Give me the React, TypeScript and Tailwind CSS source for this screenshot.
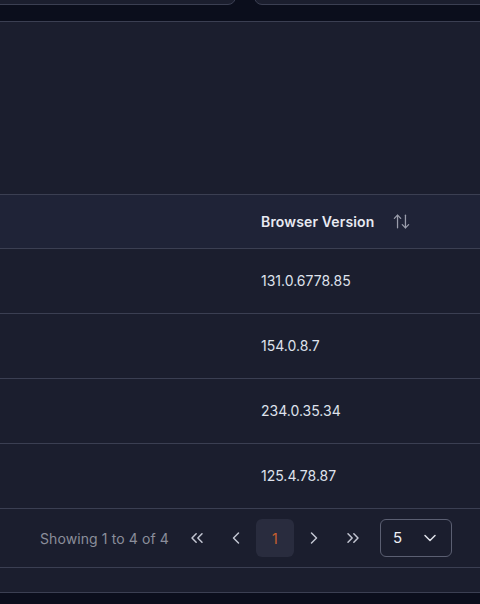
import React from "react";
import { ArrowUpDown, ChevronsLeft, ChevronLeft, ChevronRight, ChevronsRight, ChevronDown } from "lucide-react";

const rows = ["131.0.6778.85", "154.0.8.7", "234.0.35.34", "125.4.78.87"];

export default function App() {
  return (
    <div
      className="w-[480px] h-[604px] overflow-hidden bg-[#0b0e1c]"
      style={{ fontFamily: "Inter, 'Noto Sans', sans-serif" }}
    >
      {/* top cards (cut off) */}
      <div className="flex h-[5px] items-end">
        <div className="ml-[-20px] w-[256px] h-[30px] shrink-0 rounded-b-lg border border-[#3b3f52] bg-[#1b1e2e]" />
        <div className="ml-[18px] w-[260px] h-[30px] shrink-0 rounded-b-lg border border-[#3b3f52] bg-[#1b1e2e]" />
      </div>

      {/* panel */}
      <div className="mt-[16px] border-t border-[#3b3f52] bg-[#1b1e2e]">
        <div className="h-[172px]" />
        {/* header */}
        <div className="flex h-[55px] items-center border-y border-[#3b3f52] bg-[#1f2337]">
          <div className="w-[261px] shrink-0" />
          <span className="text-[14px] font-semibold tracking-[0.15px] text-[#e8eaf2]">Browser Version</span>
          <ArrowUpDown className="ml-[17px] text-[#9a9dab]" size={19} strokeWidth={1.6} />
        </div>
        {rows.map((r) => (
          <div key={r} className="flex h-[65px] items-center border-b border-[#3b3f52] pb-[2px]">
            <div className="w-[261px] shrink-0" />
            <span className="text-[14px] text-[#dfe2ec]">{r}</span>
          </div>
        ))}
        {/* pagination */}
        <div className="flex h-[59px] items-center border-b border-[#3b3f52] pl-[40px]">
          <span className="text-[14px] tracking-[0.1px] text-[#8b8e9b]">Showing 1 to 4 of 4</span>
          <div className="ml-[9px] flex items-center gap-px">
            <button className="flex h-[38px] w-[38px] items-center justify-center text-[#c3c6d2]">
              <ChevronsLeft size={20} strokeWidth={1.8} />
            </button>
            <button className="flex h-[38px] w-[38px] items-center justify-center text-[#c3c6d2]">
              <ChevronLeft size={20} strokeWidth={1.8} />
            </button>
            <button className="flex h-[38px] w-[38px] items-center justify-center rounded-md bg-[#292c3e] text-[14px] text-[#c8602e]">
              1
            </button>
            <button className="flex h-[38px] w-[38px] items-center justify-center text-[#c3c6d2]">
              <ChevronRight size={20} strokeWidth={1.8} />
            </button>
            <button className="flex h-[38px] w-[38px] items-center justify-center text-[#c3c6d2]">
              <ChevronsRight size={20} strokeWidth={1.8} />
            </button>
          </div>
          <div className="ml-[8px] flex h-[38px] w-[72px] items-center justify-between rounded-md border border-[#5b5f72] pl-[12px] pr-[11px]">
            <span className="text-[15px] text-[#eef0f6]">5</span>
            <ChevronDown size={20} strokeWidth={1.8} className="text-[#e0e2ea]" />
          </div>
        </div>
        <div className="h-[25px] border-b border-[#3b3f52]" />
      </div>
    </div>
  );
}
